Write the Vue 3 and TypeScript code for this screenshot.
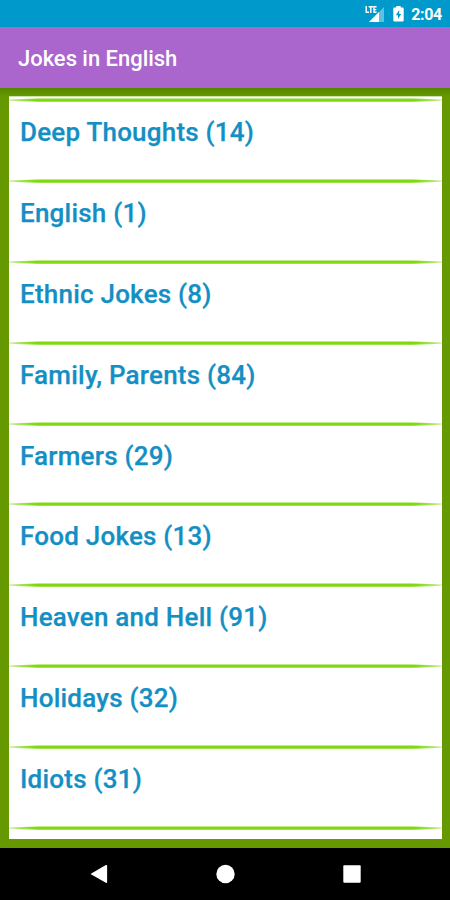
<script setup lang="ts">
interface Category {
  name: string
  count: number
}

const categories: Category[] = [
  { name: 'Deep Thoughts', count: 14 },
  { name: 'English', count: 1 },
  { name: 'Ethnic Jokes', count: 8 },
  { name: 'Family, Parents', count: 84 },
  { name: 'Farmers', count: 29 },
  { name: 'Food Jokes', count: 13 },
  { name: 'Heaven and Hell', count: 91 },
  { name: 'Holidays', count: 32 },
  { name: 'Idiots', count: 31 },
]
</script>

<template>
  <div class="screen">
    <div class="status">
      <svg class="signal" width="20" height="18" viewBox="0 0 20 18">
        <path d="M19 1V16H4Z" fill="#5fc0e0" />
        <path d="M14 6V16H4Z" fill="#fff" />
        <path d="M0 0H12V7H7L5 9H0Z" fill="#0099cc" />
        <path d="M1.2 0V6.3H4M3.6 .8H8M5.8 .8V7M11.6 .8H9V6.3H11.6M9 3.6H11.3" fill="none" stroke="#fff" stroke-width="1.4" />
      </svg>
      <svg class="battery" width="11" height="16" viewBox="0 0 11 16">
        <path d="M3.3 0H7.7V1.6H9.6Q10.7 1.6 10.7 2.7V14.5Q10.7 15.6 9.6 15.6H1.4Q.3 15.6 .3 14.5V2.7Q.3 1.6 1.4 1.6H3.3Z" fill="#fff" />
        <path d="M6.2 4L2.9 9.2H5V13L8.2 7.9H6.2Z" fill="#0099cc" />
      </svg>
      <span class="clock">2:04</span>
    </div>
    <header class="bar"><h1 class="title">Jokes in English</h1></header>
    <main class="frame">
      <div class="list">
        <svg class="divider" viewBox="0 0 433 4" preserveAspectRatio="none"><use href="#taper" /></svg>
        <div v-for="c in categories" :key="c.name" class="row">
          <span class="label">{{ c.name }} ({{ c.count }})</span>
          <svg class="divider" viewBox="0 0 433 4" preserveAspectRatio="none">
            <defs>
              <linearGradient id="line" x1="0" x2="1" y1="0" y2="0">
                <stop offset="0" stop-color="#80d810" stop-opacity="0.45" />
                <stop offset="0.06" stop-color="#80d810" />
                <stop offset="0.94" stop-color="#80d810" />
                <stop offset="1" stop-color="#80d810" stop-opacity="0.45" />
              </linearGradient>
              <path id="taper" d="M0 1.5Q12 .6 30 .4H403Q421 .6 433 1.5V2.5Q421 3.6 403 3.7H30Q12 3.6 0 2.5Z" fill="url(#line)" />
            </defs>
            <use href="#taper" />
          </svg>
        </div>
      </div>
    </main>
    <nav class="nav">
      <svg width="18" height="20" viewBox="0 0 18 20"><path d="M.5 10L15.8 1Q17.1.5 17.1 2V18Q17.1 19.4 15.8 18.8Z" fill="#fff" /></svg>
      <svg width="20" height="20" viewBox="0 0 20 20"><circle cx="9.5" cy="10" r="9.2" fill="#fff" /></svg>
      <svg width="18" height="20" viewBox="0 0 18 20"><rect x=".3" y="1.3" width="17.4" height="17.4" rx="1" fill="#fff" /></svg>
    </nav>
  </div>
</template>

<style>
body {
  margin: 0;
}
</style>

<style scoped>
.screen {
  width: 450px;
  height: 900px;
  display: flex;
  flex-direction: column;
  overflow: hidden;
  background: #000;
  font-family: Roboto, sans-serif;
}
.status {
  height: 27px;
  flex: none;
  box-sizing: border-box;
  display: flex;
  align-items: center;
  justify-content: flex-end;
  padding-right: 8px;
  background: #0099cc;
}
.signal {
  margin: 3px 8px 0 0;
}
.battery {
  margin: 1px 7px 0 0;
}
.clock {
  color: #fff;
  font-size: 16px;
  font-weight: 700;
  letter-spacing: -0.3px;
  line-height: 27px;
  padding-top: 2px;
}
.bar {
  height: 61px;
  flex: none;
  background: #aa66cc;
}
.title {
  margin: 0;
  padding-left: 18px;
  color: #fff;
  font-size: 22px;
  font-weight: 500;
  letter-spacing: -0.03px;
  line-height: 63px;
}
.frame {
  height: 760px;
  flex: none;
  box-sizing: border-box;
  padding: 8px 8px 9px 9px;
  background: linear-gradient(#538300, #669900 8px);
}
.list {
  height: 743px;
  overflow: hidden;
  background: linear-gradient(#cfe0b0 1px, #fff 1px);
  padding-top: 2px;
  box-sizing: border-box;
}
.row {
  height: 80.9px;
  display: flex;
  flex-direction: column;
  justify-content: space-between;
}
.divider {
  display: block;
  width: 433px;
  height: 4px;
  flex: none;
}
.label {
  padding: 12px 0 0 11px;
  color: #148fc4;
  font-size: 26px;
  font-weight: 500;
  letter-spacing: 0.22px;
  -webkit-text-stroke: 0.25px #148fc4;
  line-height: 36px;
  white-space: nowrap;
}
.nav {
  height: 52px;
  flex: none;
  box-sizing: border-box;
  display: flex;
  align-items: center;
  justify-content: space-between;
  padding: 0 89px 0 90px;
}
</style>
